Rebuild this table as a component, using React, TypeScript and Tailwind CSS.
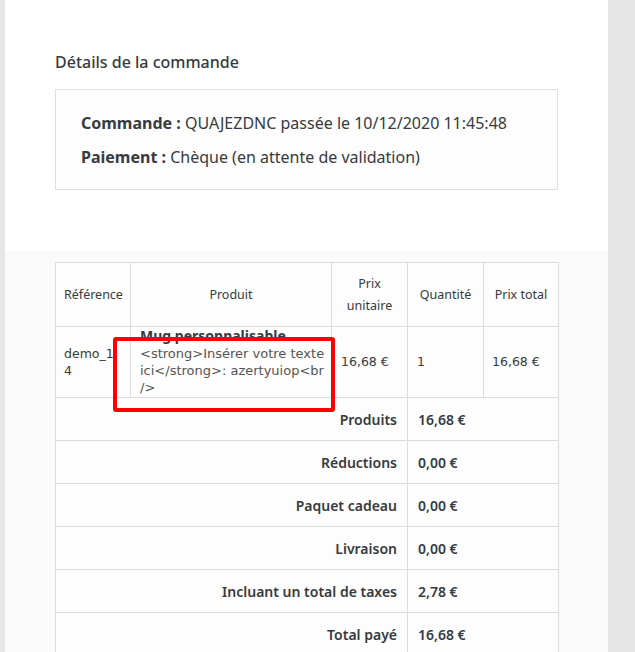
import React from "react";

const sans = { fontFamily: '"Noto Sans", "Open Sans", sans-serif' };

export default function App() {
  const rows: [string, string][] = [
    ["Produits", "16,68 €"],
    ["Réductions", "0,00 €"],
    ["Paquet cadeau", "0,00 €"],
    ["Livraison", "0,00 €"],
    ["Incluant un total de taxes", "2,78 €"],
    ["Total payé", "16,68 €"],
  ];
  return (
    <div className="relative w-[635px] h-[652px] overflow-hidden bg-[#e6e6e6] text-[#363a41]" style={sans}>
      <div className="ml-[5px] w-[603px] h-full flex flex-col">
        <div className="shrink-0 bg-white h-[251px] pt-[52px] px-[50px]">
          <h3 className="text-[16px] leading-[20px] font-medium text-[#363a41]">Détails de la commande</h3>
          <div className="mt-[17px] w-[503px] h-[101px] border border-[#dfdfdf] bg-[#fdfdfd] pl-[25px] pt-[21px]">
            <p className="text-[16px] leading-[24px]">
              <span className="font-bold">Commande :</span> QUAJEZDNC passée le 10/12/2020 11:45:48
            </p>
            <p className="text-[16px] leading-[24px] mt-[10px]">
              <span className="font-bold">Paiement :</span> Chèque (en attente de validation)
            </p>
          </div>
        </div>
        <div className="flex-1 bg-[#fafafa] pt-[11px] px-[50px]">
          <table className="w-[503px] border-collapse table-fixed bg-[#fdfdfd] text-[#363a41]">
            <colgroup>
              <col className="w-[75px]" />
              <col className="w-[201px]" />
              <col className="w-[76px]" />
              <col className="w-[76px]" />
              <col className="w-[75px]" />
            </colgroup>
            <thead>
              <tr className="h-[64px]">
                {["Référence", "Produit", "Prix unitaire", "Quantité", "Prix total"].map((h) => (
                  <th key={h} className="border border-[#dcdcdc] px-[8px] text-[12.5px] leading-[22px] font-normal text-center">
                    {h}
                  </th>
                ))}
              </tr>
            </thead>
            <tbody>
              <tr className="h-[71px]" style={{ fontFamily: '"DejaVu Sans", sans-serif' }}>
                <td className="border border-[#dcdcdc] px-[8px] text-[12.5px] leading-[17px] align-middle">
                  demo_1
                  <br />4
                </td>
                <td className="border border-[#dcdcdc] pl-[9px] pr-[6px] pt-0 pb-[1px] text-[13px] leading-[17px] align-top text-[#555555]">
                  <div className="font-bold text-[14px] leading-[18px] text-[#363a41]" style={sans}>Mug personnalisable</div>
                  <div>&lt;strong&gt;Insérer votre texte ici&lt;/strong&gt;: azertyuiop&lt;br /&gt;</div>
                </td>
                <td className="border border-[#dcdcdc] px-[9px] text-[12.5px] align-middle">16,68 €</td>
                <td className="border border-[#dcdcdc] px-[9px] text-[12.5px] align-middle">1</td>
                <td className="border border-[#dcdcdc] px-[8px] text-[12.5px] align-middle">16,68 €</td>
              </tr>
              {rows.map(([l, v]) => (
                <tr key={l} className="h-[43px]">
                  <td colSpan={3} className="border border-[#dcdcdc] pr-[10px] text-right text-[14px] font-semibold">
                    {l}
                  </td>
                  <td colSpan={2} className="border border-[#dcdcdc] pl-[10px] text-[14px] font-semibold">
                    {v}
                  </td>
                </tr>
              ))}
            </tbody>
          </table>
        </div>
      </div>
      <div className="absolute left-[113px] top-[337px] w-[222px] h-[75px] border-[4px] border-[#ff0000] rounded-[3px]" />
    </div>
  );
}
